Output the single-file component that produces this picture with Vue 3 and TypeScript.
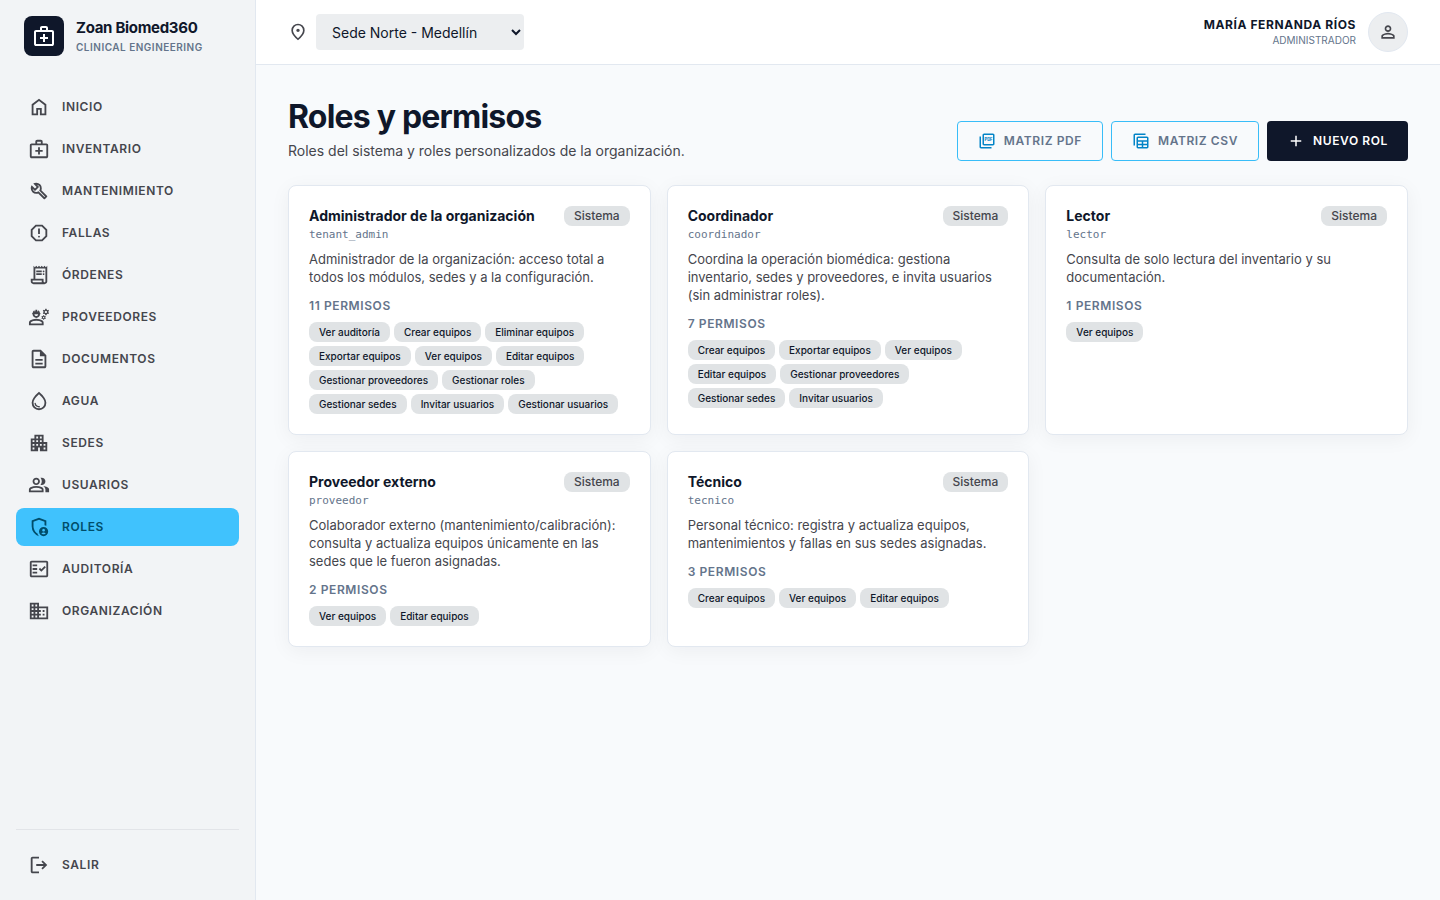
<script setup lang="ts">
import { ref } from 'vue'

interface NavItem {
  label: string
  icon: string
}

interface Role {
  name: string
  slug: string
  description: string
  permissions: string[]
}

const icons: Record<string, string> = {
  home: 'M240-200h120v-240h240v240h120v-360L480-740 240-560v360Zm-80 80v-480l320-240 320 240v480H520v-240h-80v240H160Z',
  medical: 'M160-80q-33 0-56.5-23.5T80-160v-480q0-33 23.5-56.5T160-720h160v-80q0-33 23.5-56.5T400-880h160q33 0 56.5 23.5T640-800v80h160q33 0 56.5 23.5T880-640v480q0 33-23.5 56.5T800-80H160Zm0-80h640v-480H160v480Zm240-560h160v-80H400v80ZM440-360v120h80v-120h120v-80H520v-120h-80v120H320v80h120Z',
  build: 'M686-132 444-376q-20 8-40.5 12t-43.5 4q-100 0-170-70t-70-170q0-36 10-68.5t28-61.5l146 146 72-72-146-146q29-18 61.5-28t68.5-10q100 0 170 70t70 170q0 23-4 43.5T584-516l244 242q12 12 12 29t-12 29l-84 84q-12 12-29 12t-29-12Zm29-85 27-27-256-256q18-20 26-46.5t8-53.5q0-60-38.5-104.5T386-758l74 74q12 12 12 28t-12 28L332-500q-12 12-28 12t-28-12l-74-74q9 57 53.5 95.5T360-440q26 0 52-8t47-25l256 256Z',
  report: 'M480-280q17 0 28.5-11.5T520-320q0-17-11.5-28.5T480-360q-17 0-28.5 11.5T440-320q0 17 11.5 28.5T480-280Zm-40-160h80v-240h-80v240ZM330-120 120-330v-300l210-210h300l210 210v300L630-120H330Zm34-80h232l164-164v-232L596-760H364L200-596v232l164 164Z',
  receipt: 'M240-80q-50 0-85-35t-35-85v-120h120v-560l60 60 60-60 60 60 60-60 60 60 60-60 60 60 60-60 60 60 60-60v680q0 50-35 85t-85 35H240Zm480-80q17 0 28.5-11.5T760-200v-560H320v440h360v120q0 17 11.5 28.5T720-160ZM360-600v-80h240v80H360Zm0 120v-80h240v80H360Zm320-120q-17 0-28.5-11.5T640-640q0-17 11.5-28.5T680-680q17 0 28.5 11.5T720-640q0 17-11.5 28.5T680-600Zm0 120q-17 0-28.5-11.5T640-520q0-17 11.5-28.5T680-560q17 0 28.5 11.5T720-520q0 17-11.5 28.5T680-480ZM240-160h360v-80H200v40q0 17 11.5 28.5T240-160Z',
  engineering: 'M42-120v-112q0-33 17-62t47-44q51-26 115-44t141-18q77 0 141 18t115 44q30 15 47 44t17 62v112H42Zm80-80h480v-32q0-11-5.5-20T582-266q-36-18-92.5-36T362-320q-71 0-127.5 18T142-266q-9 5-14.5 14t-5.5 20v32Zm240-240q-66 0-113-47t-47-113h-10q-9 0-14.5-5.5T172-620q0-9 5.5-14.5T192-640h10q0-45 22-81t58-57v38q0 9 5.5 14.5T302-720q9 0 14.5-5.5T322-740v-54q9-3 19-4.5t21-1.5q11 0 21 1.5t19 4.5v54q0 9 5.5 14.5T422-720q9 0 14.5-5.5T442-740v-38q36 21 58 57t22 81h10q9 0 14.5 5.5T552-620q0 9-5.5 14.5T532-600h-10q0 66-47 113t-113 47Zm0-80q33 0 56.5-23.5T442-600H282q0 33 23.5 56.5T362-520Zm300 160-6-30q-6-2-11.5-4.5T634-402l-28 10-20-36 22-20v-24l-22-20 20-36 28 10q4-4 10-7t12-5l6-30h40l6 30q6 2 12 5t10 7l28-10 20 36-22 20v24l22 20-20 36-28-10q-5 5-10.5 7.5T708-390l-6 30h-40Zm20-70q12 0 21-9t9-21q0-12-9-21t-21-9q-12 0-21 9t-9 21q0 12 9 21t21 9Zm72-130-8-42q-9-3-16.5-7.5T716-620l-42 14-28-48 34-30q-2-5-2-8v-16q0-3 2-8l-34-30 28-48 42 14q6-6 13.5-10.5T746-798l8-42h56l8 42q9 3 16.5 7.5T848-780l42-14 28 48-34 30q2 5 2 8v16q0 3-2 8l34 30-28 48-42-14q-6 6-13.5 10.5T818-602l-8 42h-56Zm28-90q21 0 35.5-14.5T832-700q0-21-14.5-35.5T782-750q-21 0-35.5 14.5T732-700q0 21 14.5 35.5T782-650Z',
  description: 'M320-240h320v-80H320v80Zm0-160h320v-80H320v80ZM240-80q-33 0-56.5-23.5T160-160v-640q0-33 23.5-56.5T240-880h320l240 240v480q0 33-23.5 56.5T720-80H240Zm280-520v-200H240v640h480v-440H520Z',
  water: 'M491-200q12-1 20.5-9.5T520-230q0-14-9-22.5t-23-7.5q-41 3-87-22.5T343-375q-2-11-10.5-18t-19.5-7q-14 0-23 10.5t-6 24.5q17 91 80 130t127 35ZM480-80q-137 0-228.5-94T160-408q0-100 79.5-217.5T480-880q161 137 240.5 254.5T800-408q0 140-91.5 234T480-80Zm0-80q104 0 172-70.5T720-408q0-73-60.5-165T480-774Q361-665 300.5-573T240-408q0 107 68 177.5T480-160Z',
  apartment: 'M120-120v-560h160v-160h400v320h160v400H520v-160h-80v160H120Zm80-80h80v-80h-80v80Zm0-160h80v-80h-80v80Zm0-160h80v-80h-80v80Zm160 160h80v-80h-80v80Zm0-160h80v-80h-80v80Zm0-160h80v-80h-80v80Zm160 320h80v-80h-80v80Zm0-160h80v-80h-80v80Zm0-160h80v-80h-80v80Zm160 480h80v-80h-80v80Zm0-160h80v-80h-80v80Z',
  group: 'M40-160v-112q0-34 17.5-62.5T104-378q62-31 126-46.5T360-440q66 0 130 15.5T616-378q29 15 46.5 43.5T680-272v112H40Zm720 0v-120q0-44-24.5-84.5T666-434q51 6 96 20.5t84 35.5q36 20 55 44.5t19 53.5v120H760ZM360-480q-66 0-113-47t-47-113q0-66 47-113t113-47q66 0 113 47t47 113q0 66-47 113t-113 47Zm400-160q0 66-47 113t-113 47q-11 0-28-2.5t-28-5.5q27-32 41.5-71t14.5-81q0-42-14.5-81T544-792q14-5 28-6.5t28-1.5q66 0 113 47t47 113ZM120-240h480v-32q0-11-5.5-20T580-306q-54-27-109-40.5T360-360q-56 0-111 13.5T140-306q-9 5-14.5 14t-5.5 20v32Zm240-320q33 0 56.5-23.5T440-640q0-33-23.5-56.5T360-720q-33 0-56.5 23.5T280-640q0 33 23.5 56.5T360-560Z',
  admin: 'M680-280q25 0 42.5-17.5T740-340q0-25-17.5-42.5T680-400q-25 0-42.5 17.5T620-340q0 25 17.5 42.5T680-280Zm0 120q31 0 57-14.5t42-38.5q-22-13-47-20t-52-7q-27 0-52 7t-47 20q16 24 42 38.5t57 14.5ZM480-80q-139-35-229.5-159.5T160-516v-244l320-120 320 120v227q-19-8-39-14.5t-41-9.5v-147l-240-90-240 90v188q0 47 12.5 94t35 89.5Q310-290 342-254t71 60q11 32 29 61t41 52q-1 0-1.5.5t-1.5.5Zm200 0q-83 0-141.5-58.5T480-280q0-83 58.5-141.5T680-480q83 0 141.5 58.5T880-280q0 83-58.5 141.5T680-80Z',
  check: 'M160-120q-33 0-56.5-23.5T80-200v-560q0-33 23.5-56.5T160-840h640q33 0 56.5 23.5T880-760v560q0 33-23.5 56.5T800-120H160Zm0-80h640v-560H160v560Zm40-80h200v-80H200v80Zm382-80 198-198-57-57-141 142-57-57-56 57 113 113Zm-382-80h200v-80H200v80Zm0-160h200v-80H200v80Z',
  domain: 'M80-120v-720h400v160h400v560H80Zm80-80h80v-80h-80v80Zm0-160h80v-80h-80v80Zm0-160h80v-80h-80v80Zm0-160h80v-80h-80v80Zm160 480h80v-80h-80v80Zm0-160h80v-80h-80v80Zm0-160h80v-80h-80v80Zm0-160h80v-80h-80v80Zm160 480h320v-400H480v80h80v80h-80v80h80v80h-80v80Zm160-240v-80h80v80h-80Zm0 160v-80h80v80h-80Z',
  logout: 'M200-120q-33 0-56.5-23.5T120-200v-560q0-33 23.5-56.5T200-840h280v80H200v560h280v80H200Zm440-160-55-58 102-102H360v-80h327L585-622l55-58 200 200-200 200Z',
  location: 'M480-480q33 0 56.5-23.5T560-560q0-33-23.5-56.5T480-640q-33 0-56.5 23.5T400-560q0 33 23.5 56.5T480-480Zm0 294q122-112 181-203.5T720-552q0-109-69.5-178.5T480-800q-101 0-170.5 69.5T240-552q0 71 59 162.5T480-186Zm0 106Q319-217 239.5-334.5T160-552q0-150 96.5-239T480-880q127 0 223.5 89T800-552q0 100-79.5 217.5T480-80Z',
  person: 'M480-480q-66 0-113-47t-47-113q0-66 47-113t113-47q66 0 113 47t47 113q0 66-47 113t-113 47ZM160-160v-112q0-34 17.5-62.5T224-378q62-31 126-46.5T480-440q66 0 130 15.5T736-378q29 15 46.5 43.5T800-272v112H160Zm80-80h480v-32q0-11-5.5-20T700-306q-54-27-109-40.5T480-360q-56 0-111 13.5T260-306q-9 5-14.5 14t-5.5 20v32Zm240-320q33 0 56.5-23.5T560-640q0-33-23.5-56.5T480-720q-33 0-56.5 23.5T400-640q0 33 23.5 56.5T480-560Z',
  pages: 'M320-240q-33 0-56.5-23.5T240-320v-480q0-33 23.5-56.5T320-880h480q33 0 56.5 23.5T880-800v480q0 33-23.5 56.5T800-240H320Zm0-80h480v-480H320v480ZM160-80q-33 0-56.5-23.5T80-160v-560h80v560h560v80H160Z',
  table: 'M320-80q-33 0-56.5-23.5T240-160v-480q0-33 23.5-56.5T320-720h480q33 0 56.5 23.5T880-640v480q0 33-23.5 56.5T800-80H320Zm0-440h480v-120H320v120Zm0 180h200v-100H320v100Zm280 0h200v-100H600v100ZM320-160h200v-100H320v100Zm280 0h200v-100H600v100ZM80-240v-560q0-33 23.5-56.5T160-880h560v80H160v560H80Z',
  add: 'M440-440H200v-80h240v-240h80v240h240v80H520v240h-80v-240Z',
}

const navItems: NavItem[] = [
  { label: 'Inicio', icon: 'home' },
  { label: 'Inventario', icon: 'medical' },
  { label: 'Mantenimiento', icon: 'build' },
  { label: 'Fallas', icon: 'report' },
  { label: 'Órdenes', icon: 'receipt' },
  { label: 'Proveedores', icon: 'engineering' },
  { label: 'Documentos', icon: 'description' },
  { label: 'Agua', icon: 'water' },
  { label: 'Sedes', icon: 'apartment' },
  { label: 'Usuarios', icon: 'group' },
  { label: 'Roles', icon: 'admin' },
  { label: 'Auditoría', icon: 'check' },
  { label: 'Organización', icon: 'domain' },
]

const active = ref('Roles')
const site = ref('Sede Norte - Medellín')

const roles: Role[] = [
  {
    name: 'Administrador de la organización',
    slug: 'tenant_admin',
    description: 'Administrador de la organización: acceso total a todos los módulos, sedes y a la configuración.',
    permissions: ['Ver auditoría', 'Crear equipos', 'Eliminar equipos', 'Exportar equipos', 'Ver equipos', 'Editar equipos', 'Gestionar proveedores', 'Gestionar roles', 'Gestionar sedes', 'Invitar usuarios', 'Gestionar usuarios'],
  },
  {
    name: 'Coordinador',
    slug: 'coordinador',
    description: 'Coordina la operación biomédica: gestiona inventario, sedes y proveedores, e invita usuarios (sin administrar roles).',
    permissions: ['Crear equipos', 'Exportar equipos', 'Ver equipos', 'Editar equipos', 'Gestionar proveedores', 'Gestionar sedes', 'Invitar usuarios'],
  },
  {
    name: 'Lector',
    slug: 'lector',
    description: 'Consulta de solo lectura del inventario y su documentación.',
    permissions: ['Ver equipos'],
  },
  {
    name: 'Proveedor externo',
    slug: 'proveedor',
    description: 'Colaborador externo (mantenimiento/calibración): consulta y actualiza equipos únicamente en las sedes que le fueron asignadas.',
    permissions: ['Ver equipos', 'Editar equipos'],
  },
  {
    name: 'Técnico',
    slug: 'tecnico',
    description: 'Personal técnico: registra y actualiza equipos, mantenimientos y fallas en sus sedes asignadas.',
    permissions: ['Crear equipos', 'Ver equipos', 'Editar equipos'],
  },
]
</script>

<template>
  <div class="app">
    <aside class="sidebar">
      <div class="brand">
        <span class="logo">
          <svg class="icon icon-lg" viewBox="0 -960 960 960" aria-hidden="true"><path :d="icons.medical" /></svg>
        </span>
        <div>
          <div class="brand-name">Zoan Biomed360</div>
          <div class="brand-sub">Clinical Engineering</div>
        </div>
      </div>
      <nav class="nav" aria-label="Principal">
        <a
          v-for="item in navItems"
          :key="item.label"
          href="#"
          class="nav-link"
          :class="{ active: item.label === active }"
          :aria-current="item.label === active ? 'page' : undefined"
          @click.prevent="active = item.label"
        >
          <svg class="icon icon-md" viewBox="0 -960 960 960" aria-hidden="true"><path :d="icons[item.icon]" /></svg>
          <span>{{ item.label }}</span>
        </a>
      </nav>
      <div class="sidebar-foot">
        <button type="button" class="nav-link">
          <svg class="icon icon-md" viewBox="0 -960 960 960" aria-hidden="true"><path :d="icons.logout" /></svg>
          <span>Salir</span>
        </button>
      </div>
    </aside>

    <div class="content">
      <header class="topbar">
        <div class="site">
          <label for="site" aria-label="Sede">
            <svg class="icon" viewBox="0 -960 960 960" aria-hidden="true"><path :d="icons.location" /></svg>
          </label>
          <select id="site" v-model="site">
            <option>Sede Norte - Medellín</option>
          </select>
        </div>
        <div class="user">
          <div class="user-text">
            <div class="user-name">María Fernanda Ríos</div>
            <div class="user-role">Administrador</div>
          </div>
          <button type="button" class="avatar" aria-label="Cuenta">
            <svg class="icon" viewBox="0 -960 960 960" aria-hidden="true"><path :d="icons.person" /></svg>
          </button>
        </div>
      </header>

      <main class="main">
        <div class="page-head">
          <div>
            <h1>Roles y permisos</h1>
            <p class="lead">Roles del sistema y roles personalizados de la organización.</p>
          </div>
          <div class="actions">
            <button type="button" class="btn outline">
              <svg class="icon icon-sm" viewBox="0 -960 960 960" aria-hidden="true">
                <path :d="icons.pages" />
                <text x="560" y="-480" class="icon-text">PDF</text>
              </svg>
              Matriz PDF
            </button>
            <button type="button" class="btn outline">
              <svg class="icon icon-sm" viewBox="0 -960 960 960" aria-hidden="true"><path :d="icons.table" /></svg>
              Matriz CSV
            </button>
            <button type="button" class="btn solid">
              <svg class="icon icon-sm" viewBox="0 -960 960 960" aria-hidden="true"><path :d="icons.add" /></svg>
              Nuevo rol
            </button>
          </div>
        </div>

        <section class="grid">
          <article v-for="role in roles" :key="role.slug" class="card">
            <div class="card-head">
              <div>
                <h2>{{ role.name }}</h2>
                <div class="slug">{{ role.slug }}</div>
              </div>
              <span class="badge">Sistema</span>
            </div>
            <p class="desc">{{ role.description }}</p>
            <div class="count">{{ role.permissions.length }} permisos</div>
            <ul class="chips">
              <li v-for="permission in role.permissions" :key="permission" class="chip">{{ permission }}</li>
            </ul>
          </article>
        </section>
      </main>
    </div>
  </div>
</template>

<style>
body {
  margin: 0;
  background: #f8fafc;
}
</style>

<style scoped>
.app {
  display: flex;
  min-height: 100vh;
  font-family: Inter, "Liberation Sans", sans-serif;
  font-size: 14px;
  line-height: 20px;
  color: #0f172a;
  background: #f8fafc;
}
.app * {
  box-sizing: border-box;
}
button {
  font-family: inherit;
  cursor: pointer;
}
.icon {
  width: 20px;
  height: 20px;
  flex: none;
  display: block;
  fill: currentColor;
}
.icon-sm {
  width: 18px;
  height: 18px;
}
.icon-md {
  width: 22px;
  height: 22px;
}
.icon-lg {
  width: 24px;
  height: 24px;
}
.icon-text {
  font-size: 220px;
  font-weight: 800;
  text-anchor: middle;
}

.sidebar {
  width: 256px;
  flex: none;
  box-sizing: border-box;
  display: flex;
  flex-direction: column;
  padding: 16px;
  background: #f2f4f6;
  border-right: 1px solid #e2e8f0;
}
.brand {
  display: flex;
  align-items: center;
  gap: 12px;
  padding: 0 8px;
  margin-bottom: 32px;
}
.logo {
  width: 40px;
  height: 40px;
  display: flex;
  align-items: center;
  justify-content: center;
  border-radius: 8px;
  background: #0f172a;
  color: #fff;
}
.brand-name {
  font-size: 15px;
  line-height: 20px;
  font-weight: 700;
  letter-spacing: -0.02em;
}
.brand-sub {
  margin-top: 2px;
  font-size: 10px;
  line-height: 15px;
  font-weight: 600;
  letter-spacing: 0.05em;
  text-transform: uppercase;
  color: #64748b;
}
.nav {
  flex: 1;
  display: flex;
  flex-direction: column;
  gap: 4px;
}
.nav-link {
  display: flex;
  align-items: center;
  gap: 12px;
  width: 100%;
  height: 38px;
  padding: 0 12px;
  border: 0;
  border-radius: 8px;
  background: transparent;
  color: #45464d;
  font-size: 12px;
  line-height: 16px;
  font-weight: 600;
  letter-spacing: 0.05em;
  text-transform: uppercase;
  text-decoration: none;
}
.nav-link.active {
  background: #40c2fd;
  color: #004d6a;
}
.sidebar-foot {
  padding-top: 16px;
  border-top: 1px solid #e2e4e8;
}

.content {
  flex: 1;
  min-width: 0;
}
.topbar {
  display: flex;
  align-items: center;
  justify-content: space-between;
  height: 65px;
  padding: 0 32px;
  background: #fff;
  border-bottom: 1px solid #e2e8f0;
}
.site {
  display: flex;
  align-items: center;
  gap: 8px;
  color: #45464d;
}
select {
  width: 208px;
  height: 36px;
  padding: 0 12px;
  border: 0;
  border-radius: 4px;
  background: #eceef0;
  color: #0f172a;
  font-family: inherit;
  font-size: 14px;
}
.user {
  display: flex;
  align-items: center;
  gap: 12px;
}
.user-text {
  text-align: right;
}
.user-name {
  font-size: 12px;
  line-height: 16px;
  font-weight: 700;
  letter-spacing: 0.05em;
  text-transform: uppercase;
}
.user-role {
  font-size: 10px;
  line-height: 15px;
  text-transform: uppercase;
  color: #64748b;
}
.avatar {
  width: 40px;
  height: 40px;
  padding: 0;
  display: flex;
  align-items: center;
  justify-content: center;
  border: 1px solid #e2e8f0;
  border-radius: 50%;
  background: #eceef0;
  color: #45464d;
}

.main {
  padding: 32px;
}
.page-head {
  display: flex;
  align-items: flex-end;
  justify-content: space-between;
  gap: 16px;
  margin-bottom: 24px;
}
h1 {
  margin: 0;
  font-size: 32px;
  line-height: 40px;
  font-weight: 700;
  letter-spacing: -0.025em;
}
.lead {
  margin: 4px 0 0;
  color: #45464d;
}
.actions {
  display: flex;
  gap: 8px;
}
.btn {
  display: flex;
  align-items: center;
  gap: 8px;
  height: 40px;
  padding: 0 20px;
  border: 0;
  border-radius: 4px;
  font-size: 12px;
  line-height: 16px;
  font-weight: 600;
  letter-spacing: 0.05em;
  text-transform: uppercase;
}
.outline {
  background: transparent;
  border: 1px solid #38bdf8;
  color: #64748b;
}
.outline .icon {
  color: #0284c7;
}
.solid {
  background: #0f172a;
  color: #fff;
}

.grid {
  display: grid;
  grid-template-columns: repeat(3, minmax(0, 1fr));
  gap: 16px;
}
.card {
  padding: 20px;
  border: 1px solid #e2e8f0;
  border-radius: 8px;
  background: #fff;
  box-shadow: 0 4px 20px rgba(15, 23, 42, 0.05);
}
.card-head {
  display: flex;
  align-items: flex-start;
  justify-content: space-between;
  gap: 8px;
}
h2 {
  margin: 0;
  font-size: 14px;
  line-height: 20px;
  font-weight: 700;
}
.slug {
  font-family: "DejaVu Sans Mono", monospace;
  font-size: 11px;
  line-height: 18px;
  color: #64748b;
}
.badge {
  flex: none;
  padding: 0 10px;
  border-radius: 8px;
  background: #e0e3e5;
  color: #45464d;
  font-size: 12px;
  line-height: 20px;
  font-weight: 500;
}
.desc {
  margin: 6px 0 0;
  font-size: 13px;
  line-height: 18px;
  color: #45464d;
}
.count {
  margin-top: 12px;
  font-size: 12px;
  line-height: 16px;
  font-weight: 600;
  letter-spacing: 0.05em;
  text-transform: uppercase;
  color: #64748b;
}
.chips {
  display: flex;
  flex-wrap: wrap;
  gap: 4px;
  margin: 8px 0 0;
  padding: 0;
  list-style: none;
}
.chip {
  padding: 0 10px;
  border-radius: 8px;
  background: #e0e3e5;
  font-size: 10px;
  line-height: 20px;
  font-weight: 500;
}
</style>
